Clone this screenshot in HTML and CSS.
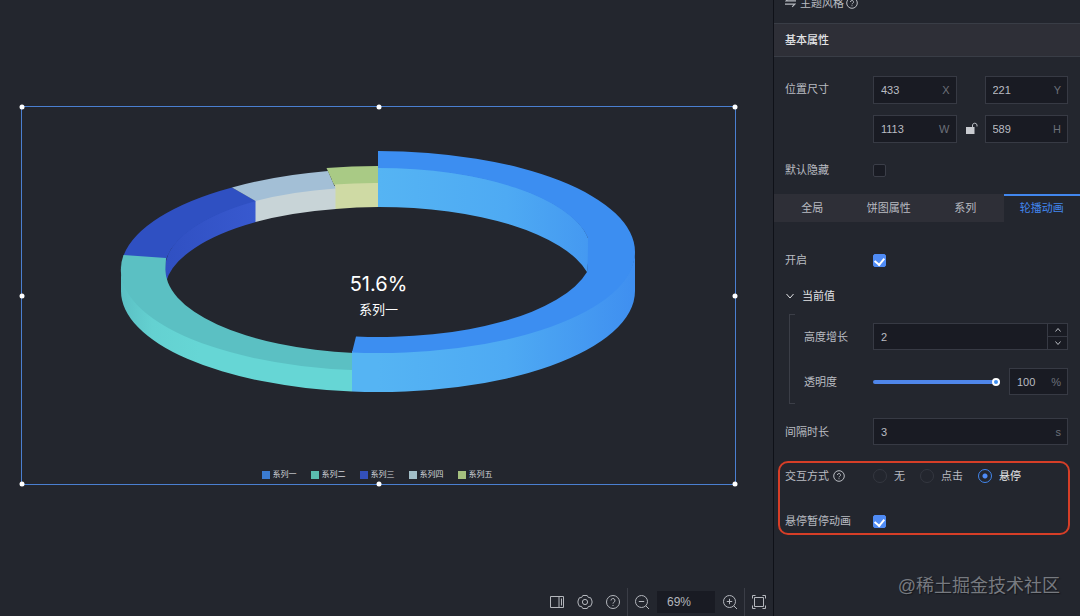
FILE: index.html
```
<!DOCTYPE html>
<html lang="zh-CN">
<head>
  <meta charset="UTF-8" />
  <meta name="viewport" content="width=device-width, initial-scale=1.0"/>
  <title>3D 环形图 - 轮播动画</title>
  <link rel="stylesheet" href="styles.css">
</head>
<body>

  <!-- Canvas -->
  <main class="stage">
    <div class="stage-view">
      <div class="chart">
        <svg class="ring" viewBox="22 107 713 377" aria-hidden="true">
          <defs>
            <linearGradient id="blueSide" gradientUnits="userSpaceOnUse" x1="378" y1="0" x2="635" y2="0">
              <stop offset="0" stop-color="#55b4f3"/>
              <stop offset="0.5" stop-color="#4eaaf3"/>
              <stop offset="1" stop-color="#3f8ff0"/>
            </linearGradient>
            <linearGradient id="tealSide" gradientUnits="userSpaceOnUse" x1="121" y1="0" x2="200" y2="0">
              <stop offset="0" stop-color="#5bc0c4"/>
              <stop offset="0.4" stop-color="#64d1d1"/>
              <stop offset="1" stop-color="#66d6d5"/>
            </linearGradient>
            <linearGradient id="navySide" gradientUnits="userSpaceOnUse" x1="166" y1="0" x2="256" y2="0">
              <stop offset="0" stop-color="#3050c2"/>
              <stop offset="1" stop-color="#3859cf"/>
            </linearGradient>
          </defs>

          <!-- inner walls -->
          <path fill="url(#navySide)" d="M165 269A213 84 0 0 1 256 200V222A213 84 0 0 0 166 282Z"/>
          <path fill="#c8d4d7" d="M255.500 200A213 84 0 0 1 336 186V209A213 84 0 0 0 255.500 222Z"/>
          <path fill="#cfdaa4" d="M332 180L378 180V207A213 84 0 0 0 335.500 209V187Z"/>
          <path fill="url(#blueSide)" d="M378 167A213 84 0 0 1 590 245L587 272A213 84 0 0 0 378 207Z"/>

          <!-- series 3, 4, 5 top faces -->
          <path fill="#2f50c2" d="M123.500 255.500A257 101 0 0 1 232 187.500L256 201A213 84 0 0 0 165.500 262V269Z"/>
          <path fill="#a3bfd6" d="M232 187.500A257 101 0 0 1 328 171L335.500 188.500A213 84 0 0 0 255.500 201Z"/>
          <path fill="#a9ca85" d="M326.500 168A257 101 0 0 1 378 166V183A213 84 0 0 0 334 184.500L332 180Z"/>

          <!-- series 2 -->
          <path fill="url(#tealSide)" d="M121 265V291A257 101 0 0 0 352 391.500V368A257 101 0 0 1 121 265Z"/>
          <path fill="#5bc0c3" d="M123.500 255A257 101 0 0 0 352 370L354 353A213 84 0 0 1 165.500 267L166 258Z"/>

          <!-- series 1 -->
          <path fill="url(#blueSide)" d="M635 250V291A257 101 0 0 1 352 391.500V351A257 101 0 0 0 635 250Z"/>
          <path fill="#3c8ef1" d="M378 151A257 101 0 0 1 635 252A257 101 0 0 1 352 352.500L356 336.500A213 84 0 0 0 587 272Q588 262 588 238A213 84 0 0 0 378 168Z"/>
        </svg>

        <div class="chart-center">
          <span class="percent">51.6%</span>
          <span class="series">系列一</span>
        </div>

        <ul class="legend">
          <li class="s1">系列一</li>
          <li class="s2">系列二</li>
          <li class="s3">系列三</li>
          <li class="s4">系列四</li>
          <li class="s5">系列五</li>
        </ul>

        <!-- Resize handles -->
        <i class="handle top left"></i>
        <i class="handle top center"></i>
        <i class="handle top right"></i>
        <i class="handle middle left"></i>
        <i class="handle middle right"></i>
        <i class="handle bottom left"></i>
        <i class="handle bottom center"></i>
        <i class="handle bottom right"></i>
      </div>
    </div>

    <div class="toolbar">
      <div class="tool-group">
        <button type="button" aria-label="面板">
          <svg viewBox="0 0 16 16"><path d="M1.500 2.500h13v11h-13zM10 2.500v11M12.500 4.500v7"/></svg>
        </button>
        <button type="button" aria-label="设置">
          <svg viewBox="0 0 16 16"><path d="M5.800 1.500h4.400l1.200 2 2.300.300L15 7v2l-1.300 3.200-2.300.300-1.200 2H5.800l-1.200-2-2.300-.300L1 9V7l1.300-3.200 2.300-.300z"/><circle cx="8" cy="8" r="2.600"/></svg>
        </button>
        <button type="button" aria-label="帮助">
          <svg viewBox="0 0 16 16"><circle cx="8" cy="8" r="6.500"/><path d="M6 6.500a2 2 0 1 1 2.900 1.800C8.200 8.700 8 9 8 9.600M8 11v1"/></svg>
        </button>
      </div>
      <div class="tool-group zoom-group">
        <button type="button" aria-label="缩小">
          <svg viewBox="0 0 16 16"><circle cx="7.500" cy="7.500" r="6"/><path d="M4.800 7.500h5.400M11.800 11.800l3.200 3.200"/></svg>
        </button>
        <input class="zoom" type="text" value="69%" aria-label="缩放比例">
        <button type="button" aria-label="放大">
          <svg viewBox="0 0 16 16"><circle cx="7.500" cy="7.500" r="6"/><path d="M4.800 7.500h5.400M7.500 4.800v5.400M11.800 11.800l3.200 3.200"/></svg>
        </button>
      </div>
      <div class="tool-group">
        <button type="button" aria-label="适应画布">
          <svg viewBox="0 0 16 16"><path d="M3.500 3.500h9v9h-9zM1.500 4.500v-3h3M11.500 1.500h3v3M14.500 11.500v3h-3M4.500 14.500h-3v-3"/></svg>
        </button>
      </div>
    </div>
  </main>

  <!-- Config panel -->
  <aside class="panel">
    <div class="theme-row">
      <svg class="swap" viewBox="0 0 10 10"><path d="M3.500 1L1 3.500h9M0 6.500h9L6.500 9"/></svg>
      <span>主题风格</span>
      <svg class="help" viewBox="0 0 12 12"><circle cx="6" cy="6" r="5.300"/><path d="M4.500 5a1.500 1.500 0 1 1 2.200 1.300Q6 6.700 6 7.300M6 8.300v.900"/></svg>
    </div>

    <h2 class="section-title">基本属性</h2>

    <div class="row size-row">
      <label class="name" for="posX">位置尺寸</label>
      <div class="size-grid">
        <div class="field"><input id="posX" type="text" value="433"><span>X</span></div>
        <div></div>
        <div class="field"><input type="text" value="221" aria-label="Y"><span>Y</span></div>
        <div class="field"><input type="text" value="1113" aria-label="宽"><span>W</span></div>
        <button class="lock" type="button" aria-label="锁定比例">
          <svg viewBox="0 0 12 14"><path class="solid" d="M0 6h8.500v7H0z"/><path d="M6.500 6V4a2.300 2.300 0 0 1 4.500 0v1.500"/></svg>
        </button>
        <div class="field"><input type="text" value="589" aria-label="高"><span>H</span></div>
      </div>
    </div>

    <div class="row hide-row">
      <label class="name" for="hidden">默认隐藏</label>
      <input id="hidden" type="checkbox">
    </div>

    <nav class="tabs">
      <button type="button">全局</button>
      <button type="button">饼图属性</button>
      <button type="button">系列</button>
      <button type="button" class="active">轮播动画</button>
    </nav>

    <div class="row enable-row">
      <label class="name" for="enable">开启</label>
      <input id="enable" type="checkbox" checked>
    </div>

    <button class="collapse" type="button">
      <svg viewBox="0 0 10 10"><path d="M1.500 3L5 7l3.500-4"/></svg>
      当前值
    </button>

    <div class="group">
      <div class="row">
        <label class="name" for="grow">高度增长</label>
        <div class="field">
          <input id="grow" type="text" value="2">
          <div class="stepper">
            <button type="button" aria-label="增加"><svg viewBox="0 0 8 8"><path d="M1.500 5.500L4 2.500l2.500 3"/></svg></button>
            <button type="button" aria-label="减少"><svg viewBox="0 0 8 8"><path d="M1.500 2.500L4 5.500l2.500-3"/></svg></button>
          </div>
        </div>
      </div>
      <div class="row">
        <label class="name" for="opacity">透明度</label>
        <input id="opacity" type="range" min="0" max="100" value="100">
        <div class="field percent-field"><input type="text" value="100" aria-label="透明度数值"><span>%</span></div>
      </div>
    </div>

    <div class="row interval-row">
      <label class="name" for="interval">间隔时长</label>
      <div class="field"><input id="interval" type="text" value="3"><span>s</span></div>
    </div>

    <!-- Highlighted options -->
    <div class="highlight">
      <div class="row">
        <span class="name" id="modeLabel">交互方式
          <svg class="help" viewBox="0 0 12 12"><circle cx="6" cy="6" r="5.300"/><path d="M4.500 5a1.500 1.500 0 1 1 2.200 1.300Q6 6.700 6 7.300M6 8.300v.900"/></svg>
        </span>
        <div class="radios" role="radiogroup" aria-labelledby="modeLabel">
          <label><input type="radio" name="mode">无</label>
          <label><input type="radio" name="mode">点击</label>
          <label class="checked"><input type="radio" name="mode" checked>悬停</label>
        </div>
      </div>
      <div class="row">
        <label class="name" for="pause">悬停暂停动画</label>
        <input id="pause" type="checkbox" checked>
      </div>
    </div>

    <div class="watermark">@稀土掘金技术社区</div>
  </aside>

</body>
</html>
```
FILE: styles.css
```
* {
  box-sizing: border-box;
}

body, html {
  height: 100%;
  margin: 0;
}

body {
  display: flex;
  overflow: hidden;
  background: #23262e;
  color: #b9bcc2;
  font-family: "Liberation Sans", "Noto Sans CJK SC", sans-serif;
  font-size: 11px;
  line-height: 16px;
}

button, input {
  margin: 0;
  padding: 0;
  border: none;
  outline: none;
  background: none;
  color: inherit;
  font: inherit;
}

button {
  cursor: pointer;
}

svg {
  display: block;
  fill: none;
  stroke: currentColor;
}

/* Canvas */
.stage {
  flex: 1;
  min-width: 0;
  display: flex;
  flex-direction: column;
}

.stage-view {
  flex: 1;
  padding: 106px 37px 0 21px;
}

.chart {
  position: relative;
  display: flex;
  flex-direction: column;
  border: 1px solid #4a7fd0;
}

.ring {
  width: 100%;
  stroke: none;
}

.chart-center {
  position: absolute;
  top: 43.5%;
  left: 0;
  right: 0;
  display: flex;
  flex-direction: column;
  align-items: center;
  color: #fff;
}

.chart-center .percent {
  font-family: Inter, sans-serif;
  font-size: 20px;
  line-height: 26px;
}

.chart-center .series {
  font-size: 13px;
  line-height: 26px;
}

.legend {
  position: absolute;
  left: 0;
  right: 0;
  bottom: 3px;
  display: flex;
  justify-content: center;
  gap: 14px;
  margin: 0;
  padding: 0 3px 0 0;
  list-style: none;
  color: #d3d5d9;
  font-size: 8px;
  line-height: 12px;
}

.legend li {
  display: flex;
  align-items: center;
  gap: 3px;
}

.legend li::before {
  content: "";
  width: 8px;
  height: 8px;
  background: #3b7bd0;
}

.legend .s2::before { background: #5bbcb0; }
.legend .s3::before { background: #3350bb; }
.legend .s4::before { background: #a2bec8; }
.legend .s5::before { background: #a5c07f; }

.handle {
  position: absolute;
  width: 5px;
  height: 5px;
  border-radius: 50%;
  background: #fff;
  transform: translate(-50%, -50%);
}

.handle.top { top: 0; }
.handle.middle { top: 50%; }
.handle.bottom { top: 100%; }
.handle.left { left: 0; }
.handle.center { left: 50%; }
.handle.right { left: 100%; }

/* Bottom toolbar */
.toolbar {
  display: flex;
  justify-content: flex-end;
  height: 28px;
  color: #b4b7bd;
}

.tool-group {
  display: flex;
  align-items: center;
  gap: 12px;
  padding: 0 6px;
}

.tool-group + .tool-group {
  border-left: 1px solid #3a3d46;
}

.zoom-group {
  gap: 7px;
}

.toolbar svg {
  width: 16px;
  height: 16px;
}

.zoom {
  width: 58px;
  height: 22px;
  padding: 0 10px;
  background: #191b23;
  font-size: 12px;
}

/* Right panel */
.panel {
  position: relative;
  width: 307px;
  border-left: 1px solid #0f1118;
}

.theme-row {
  display: flex;
  align-items: flex-end;
  gap: 4px;
  height: 23px;
  padding: 0 11px 12px;
}

.swap {
  width: 11px;
  height: 11px;
  margin-bottom: 3px;
}

.help {
  width: 12px;
  height: 12px;
  margin-bottom: 2px;
}

.theme-row .help {
  margin-left: -2px;
}

.section-title {
  margin: 0;
  padding: 8px 11px;
  border-top: 1px solid #393d46;
  border-bottom: 1px solid #393d46;
  background: #2e2f37;
  color: #e2e3e6;
  font-size: 11px;
  font-weight: 500;
  line-height: 16px;
}

.row {
  display: flex;
  align-items: center;
  padding: 0 12px 0 11px;
}

.name {
  display: flex;
  flex-shrink: 0;
  align-items: center;
  gap: 4px;
  width: 88px;
}

.name .help {
  margin: 0;
}

.size-row {
  align-items: flex-start;
  padding-top: 19px;
}

.size-row .name {
  padding-top: 5px;
}

.size-grid {
  flex: 1;
  display: grid;
  grid-template-columns: 1fr 28px 1fr;
  row-gap: 11px;
}

.field {
  flex: 1;
  display: flex;
  align-items: center;
  min-width: 0;
  height: 27px;
  border: 1px solid #373a44;
  background: #191b23;
}

.size-grid .field {
  height: 28px;
}

.field input {
  flex: 1;
  width: 0;
  height: 100%;
  padding-left: 7px;
}

.field span {
  padding-right: 6px;
  color: #6c7079;
}

.lock {
  display: flex;
  align-items: center;
  justify-content: center;
  padding: 0 0 2px 2px;
}

.lock svg {
  width: 12px;
  height: 14px;
}

.lock .solid {
  fill: #c9cbd0;
  stroke: none;
}

.hide-row {
  padding-top: 19px;
  padding-bottom: 16px;
}

input[type="checkbox"] {
  appearance: none;
  width: 13px;
  height: 13px;
  border: 1px solid #3b3e48;
  border-radius: 2px;
  background: #191b23;
}

input[type="checkbox"]:checked {
  display: flex;
  justify-content: center;
  border-color: #4f8bf5;
  background: #4f8bf5;
}

input[type="checkbox"]:checked::before {
  content: "";
  width: 5px;
  height: 7px;
  margin-top: 1px;
  border: solid #fff;
  border-width: 0 2px 2px 0;
  transform: rotate(40deg);
}

.tabs {
  display: flex;
}

.tabs button {
  flex: 1;
  height: 28px;
  background: #2e2f37;
  white-space: nowrap;
}

.tabs .active {
  border-top: 2px solid #4287ee;
  padding-bottom: 2px;
  background: none;
  color: #4287ee;
}

.enable-row {
  padding-top: 30px;
}

.collapse {
  display: flex;
  align-items: center;
  gap: 7px;
  margin: 20px 0 10px 11px;
  color: #e2e3e6;
}

.collapse svg {
  width: 10px;
  height: 10px;
}

/* Bracket on the left of the nested rows */
.group {
  position: relative;
  display: flex;
  flex-direction: column;
  gap: 18px;
  padding: 9px 0;
}

.group::before {
  content: "";
  position: absolute;
  top: 0;
  bottom: 0;
  left: 15px;
  width: 5px;
  border: 1px solid #3b3e47;
  border-right: none;
}

.group .row {
  padding-left: 30px;
}

.group .name {
  width: 69px;
}

.stepper {
  display: flex;
  flex-direction: column;
  width: 20px;
  height: 100%;
  border-left: 1px solid #373a44;
}

.stepper button {
  flex: 1;
  display: flex;
  align-items: center;
  justify-content: center;
}

.stepper button + button {
  border-top: 1px solid #373a44;
}

.stepper svg {
  width: 8px;
  height: 8px;
}

input[type="range"] {
  appearance: none;
  flex: 1;
  width: 0;
  height: 4px;
  border-radius: 2px;
  background: #4f86ea;
}

input[type="range"]::-webkit-slider-thumb {
  appearance: none;
  width: 8px;
  height: 8px;
  border: 2px solid #fff;
  border-radius: 50%;
  background: #3f8ff0;
}

.percent-field {
  flex: none;
  width: 59px;
  margin-left: 9px;
}

.interval-row {
  padding-top: 14px;
}

.highlight {
  display: flex;
  flex-direction: column;
  gap: 29px;
  margin: 16px 10px 0 4px;
  padding: 5px 0 4px;
  border: 2px solid #d63e27;
  border-radius: 10px;
}

.highlight .row {
  padding: 0 5px;
}

.radios {
  display: flex;
  gap: 15px;
}

.radios label {
  display: flex;
  align-items: center;
  gap: 7px;
}

.radios .checked {
  color: #e8e9eb;
}

input[type="radio"] {
  appearance: none;
  width: 14px;
  height: 14px;
  border: 1px solid #343740;
  border-radius: 50%;
}

input[type="radio"]:checked {
  border-color: #4287ee;
  background: radial-gradient(circle, #4f8bf5 2px, transparent 3px);
}

.watermark {
  position: absolute;
  right: 20px;
  bottom: 17px;
  color: #777a80;
  font-size: 18px;
  line-height: 26px;
  text-shadow: 1px 1px 1px #15171c;
}
```
